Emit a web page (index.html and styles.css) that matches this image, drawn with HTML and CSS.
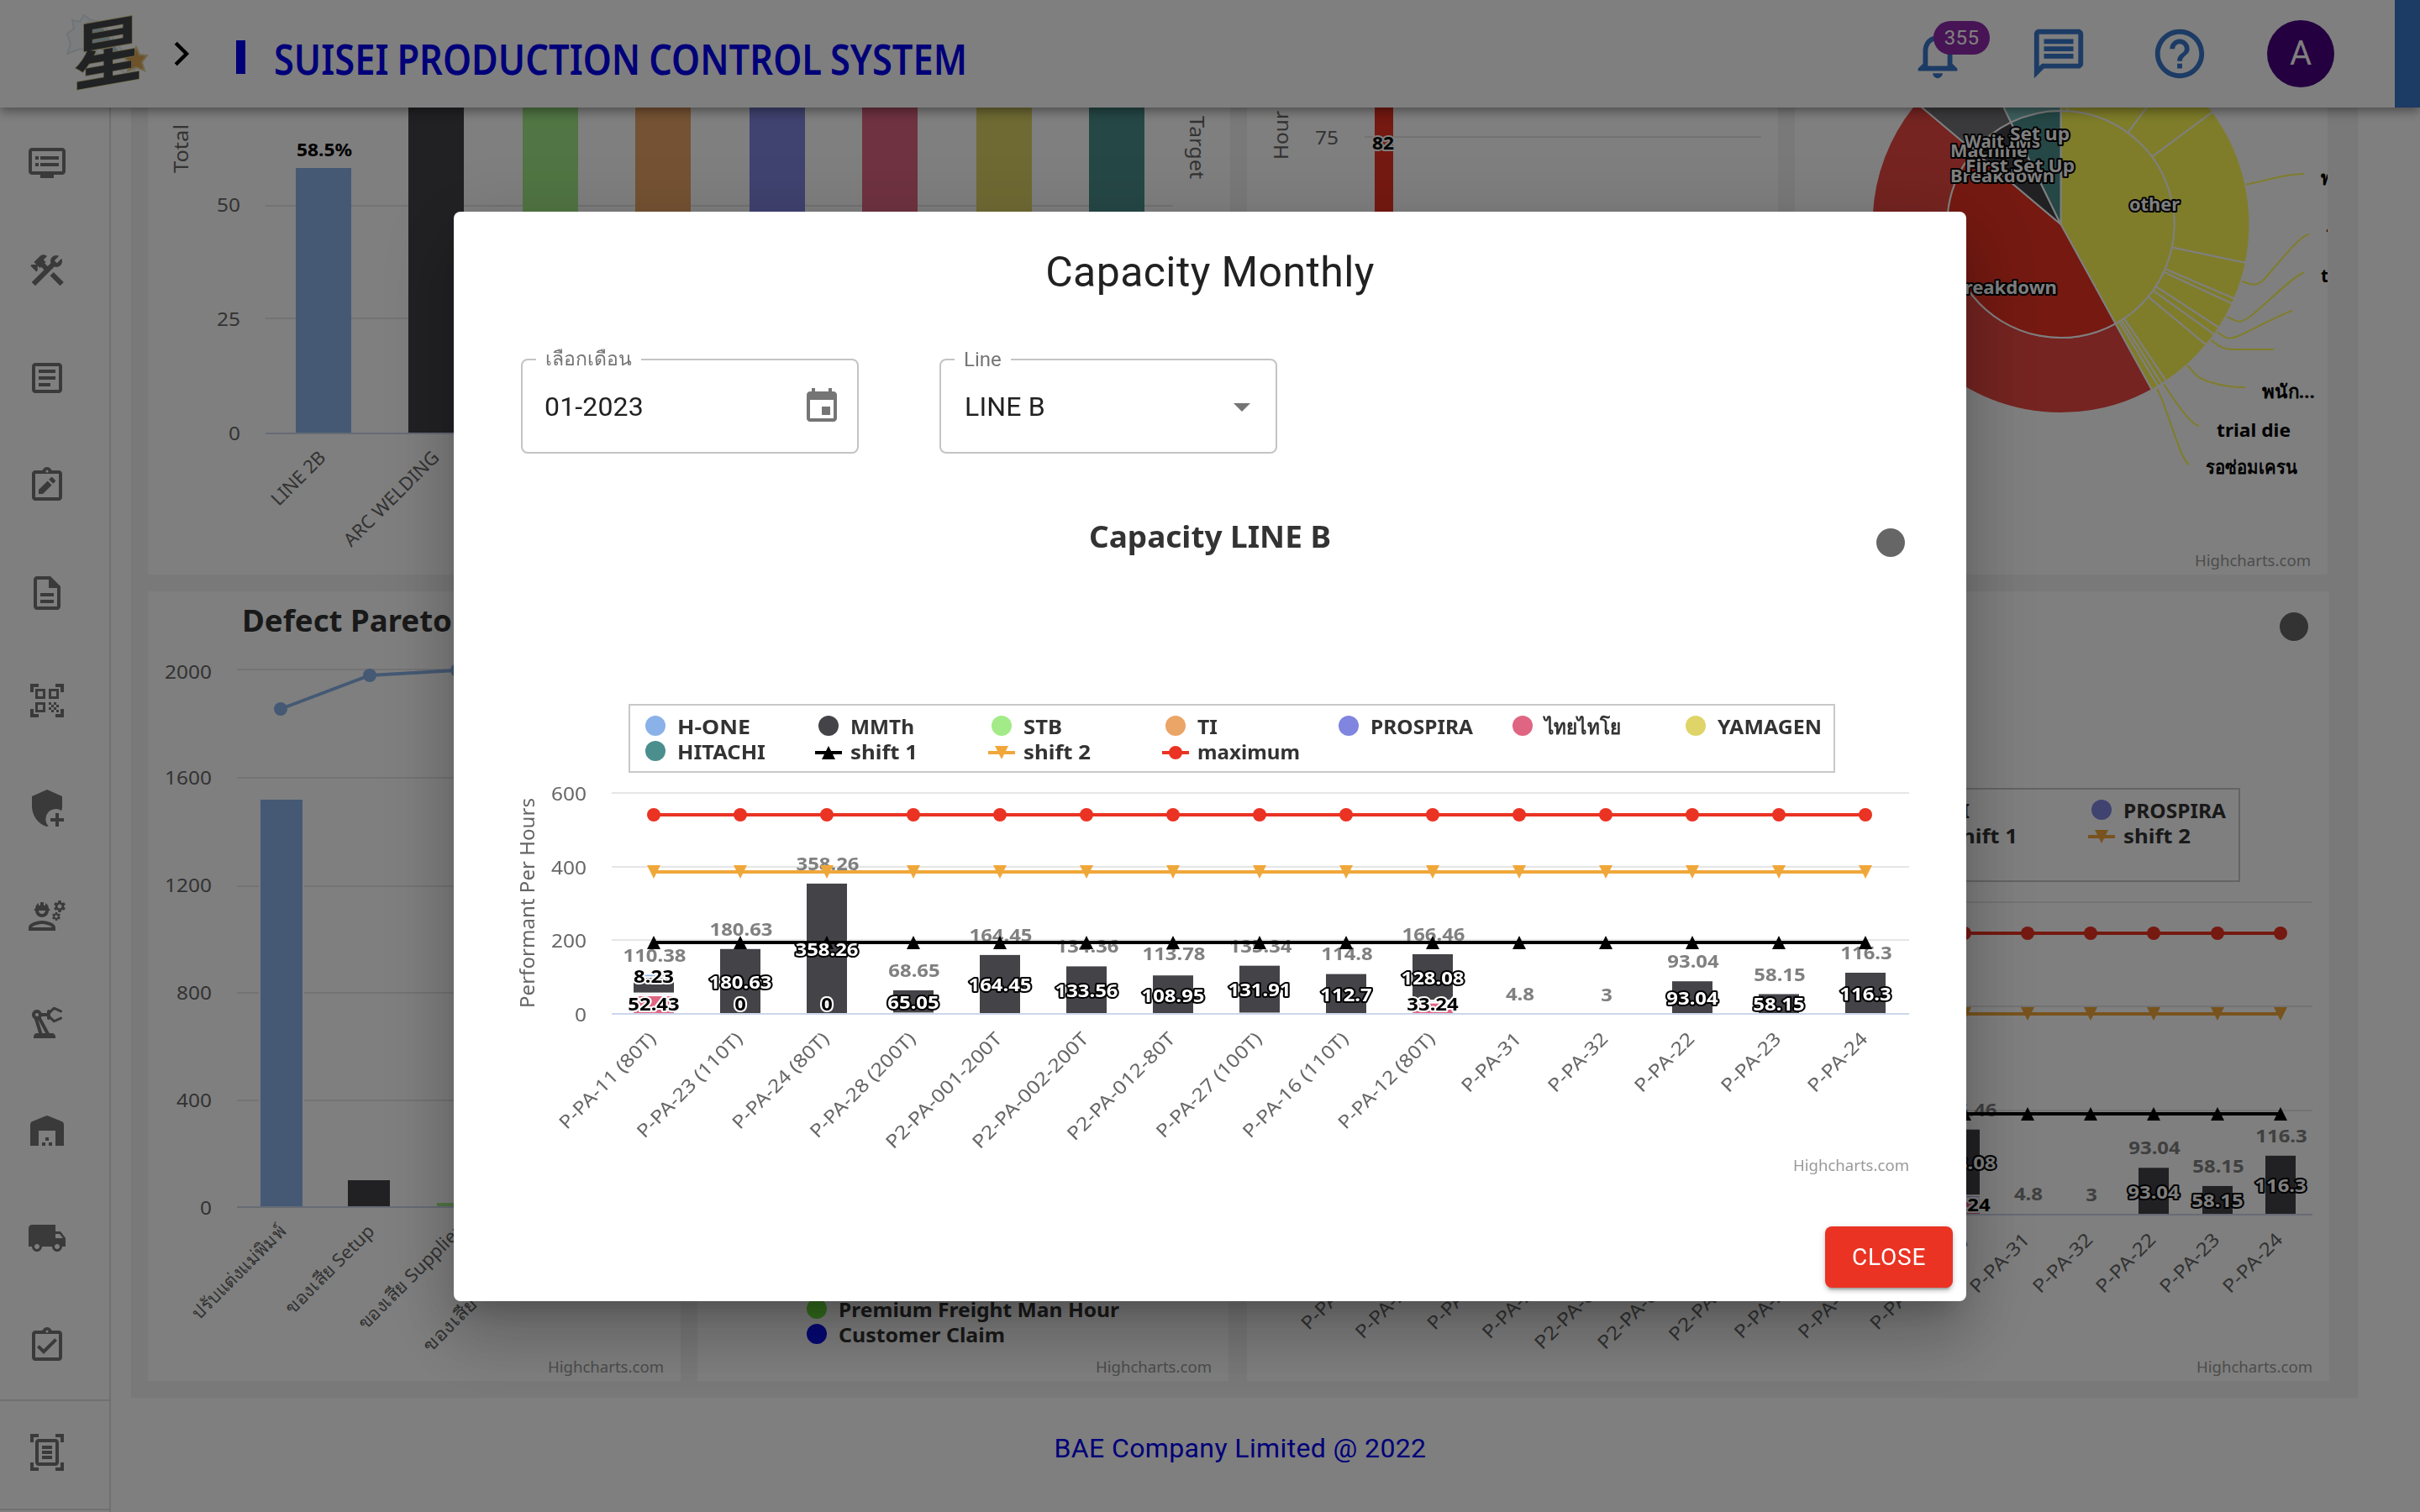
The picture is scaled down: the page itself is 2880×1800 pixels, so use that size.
FILE: index.html
```html
<!DOCTYPE html>
<html lang="th">
<head>
<meta charset="utf-8">
<title>SUISEI PRODUCTION CONTROL SYSTEM</title>
<link rel="stylesheet" href="styles.css">
</head>
<body>
<header class="appbar">
  <svg class="brand" viewBox="70 0 120 128" aria-label="SUISEI">
    <path class="splash-a" d="M80 40l8-6-2-10 9 2 5-8 8 6 12 2 28 38 14 18-10 8-30-24-26-8-16 6 4-12z"/>
    <path class="splash-b" d="M104 26l16 4 26 38-14 0-30-24z"/>
    <path class="gold-star" d="M162 56l4 9 9 1-6 8 3 10-10-4-10 5 1-11-6-7 10-2z"/>
    <text class="kanji" transform="translate(87 102) skewY(-10)" textLength="83" lengthAdjust="spacingAndGlyphs">星</text>
  </svg>
  <svg class="chevron" viewBox="0 0 24 24"><path d="M8.6 5.6l6.4 6.4-6.4 6.4"/></svg>
  <span class="bar"></span>
  <h1 class="app-title"><svg viewBox="0 0 830 64"><text x="2" y="49" textLength="825" lengthAdjust="spacingAndGlyphs">SUISEI PRODUCTION CONTROL SYSTEM</text></svg></h1>
  <nav class="actions">
    <span class="bell">
      <svg viewBox="0 0 24 24"><path d="M12 22c1.1 0 2-.9 2-2h-4c0 1.1.9 2 2 2zm6-6v-5c0-3.07-1.63-5.64-4.5-6.32V4c0-.83-.67-1.5-1.5-1.5s-1.5.67-1.5 1.5v.68C7.64 5.36 6 7.92 6 11v5l-2 2v1h16v-1l-2-2zm-2 1H8v-6c0-2.48 1.51-4.5 4-4.5s4 2.02 4 4.5v6z"/></svg>
      <b class="badge">355</b>
    </span>
    <svg viewBox="0 0 24 24"><path d="M4 4h16v12H5.17L4 17.17V4m0-2c-1.1 0-1.99.9-1.99 2L2 22l4-4h14c1.1 0 2-.9 2-2V4c0-1.1-.9-2-2-2H4zm2 10h12v2H6v-2zm0-3h12v2H6V9zm0-3h12v2H6V6z"/></svg>
    <svg viewBox="0 0 24 24"><path d="M11 18h2v-2h-2v2zm1-16C6.48 2 2 6.48 2 12s4.48 10 10 10 10-4.48 10-10S17.52 2 12 2zm0 18c-4.41 0-8-3.59-8-8s3.59-8 8-8 8 3.59 8 8-3.59 8-8 8zm0-14c-2.21 0-4 1.79-4 4h2c0-1.1.9-2 2-2s2 .9 2 2c0 2-3 1.75-3 5h2c0-2.25 3-2.5 3-5 0-2.21-1.79-4-4-4z"/></svg>
    <span class="avatar">A</span>
  </nav>
  <span class="edge"></span>
</header>

<div class="body">
<aside class="sidebar">
  <div class="item"><svg viewBox="0 0 24 24"><path d="M21 3H3c-1.1 0-2 .9-2 2v12c0 1.1.9 2 2 2h5v2h8v-2h5c1.1 0 1.99-.9 1.99-2L23 5c0-1.1-.9-2-2-2zm0 14H3V5h18v12zm-2-9H8v2h11V8zm0 4H8v2h11v-2zM7 8H5v2h2V8zm0 4H5v2h2v-2z"/></svg></div>
  <div class="item"><svg viewBox="0 0 24 24"><path d="m13.78 15.17 2.12-2.12 6 6-2.12 2.12zM17.5 10c1.93 0 3.5-1.57 3.5-3.5 0-.58-.16-1.12-.41-1.6l-2.7 2.7-1.49-1.49 2.7-2.7c-.48-.25-1.02-.41-1.6-.41C15.57 3 14 4.57 14 6.5c0 .41.08.8.21 1.16l-1.85 1.85-1.78-1.78.71-.71-1.41-1.41L12 3.49c-1.17-1.17-3.07-1.17-4.24 0L4.22 7.03l1.41 1.41H2.81l-.71.71 3.54 3.54.71-.71V9.15l1.41 1.41.71-.71 1.78 1.78-7.41 7.41 2.12 2.12L16.34 9.79c.36.13.75.21 1.16.21z"/></svg></div>
  <div class="item"><svg viewBox="0 0 24 24"><path d="M19 5v14H5V5h14m0-2H5c-1.1 0-2 .9-2 2v14c0 1.1.9 2 2 2h14c1.1 0 2-.9 2-2V5c0-1.1-.9-2-2-2zM14 17H7v-2h7v2zm3-4H7v-2h10v2zm0-4H7V7h10v2z"/></svg></div>
  <div class="item"><svg viewBox="0 0 24 24"><path fill-rule="evenodd" d="M19 3h-4.18C14.4 1.84 13.3 1 12 1s-2.4.84-2.82 2H5c-1.1 0-2 .9-2 2v14c0 1.1.9 2 2 2h14c1.1 0 2-.9 2-2V5c0-1.1-.9-2-2-2zM12 2.75a.75.75 0 1 1 0 1.5.75.75 0 0 1 0-1.5zM5 5h14v14H5zM7 14.5V17h2.5l5.3-5.3-2.5-2.5zM16.8 9.7c.3-.3.3-.7 0-1l-1.5-1.5c-.3-.3-.7-.3-1 0l-1.2 1.2 2.5 2.5z"/></svg></div>
  <div class="item"><svg viewBox="0 0 24 24"><path d="M8 16h8v2H8zm0-4h8v2H8zm6-10H6c-1.1 0-2 .9-2 2v16c0 1.1.89 2 1.99 2H18c1.1 0 2-.9 2-2V8l-6-6zm4 18H6V4h7v5h5v11z"/></svg></div>
  <div class="item"><svg viewBox="0 0 24 24"><path d="M9.5 6.5v3h-3v-3h3M11 5H5v6h6V5zm-1.5 9.5v3h-3v-3h3M11 13H5v6h6v-6zm6.5-6.5v3h-3v-3h3M19 5h-6v6h6V5zm-6 8h1.5v1.5H13V13zm1.5 1.5H16V16h-1.5v-1.5zM16 13h1.5v1.5H16V13zm-3 3h1.5v1.5H13V16zm1.5 1.5H16V19h-1.5v-1.5zM16 16h1.5v1.5H16V16zm1.5-1.5H19V16h-1.5v-1.5zm0 3H19V19h-1.5v-1.5zM22 7h-2V4h-3V2h5v5zm0 15v-5h-2v3h-3v2h5zM2 22h5v-2H4v-3H2v5zM2 2v5h2V4h3V2H2z"/></svg></div>
  <div class="item"><svg viewBox="0 0 24 24"><path d="M21 11V5l-9-4-9 4v6c0 5.55 3.84 10.74 9 12 .3-.07.6-.16.9-.26A6 6 0 0 1 20.6 13.6c.26-.85.4-1.7.4-2.6zM17 15h2v3h3v2h-3v3h-2v-3h-3v-2h3z"/></svg></div>
  <div class="item"><svg viewBox="0 0 24 24"><path d="M9 15c-2.67 0-8 1.34-8 4v2h16v-2c0-2.66-5.33-4-8-4zm-6 4c.22-.72 3.31-2 6-2 2.7 0 5.8 1.29 6 2H3zM4.74 9H5c0 2.21 1.79 4 4 4s4-1.79 4-4h.26c.27 0 .49-.22.49-.49v-.02c0-.27-.22-.49-.49-.49H13c0-1.48-.81-2.75-2-3.45v.95c0 .28-.22.5-.5.5s-.5-.22-.5-.5V4.14C9.68 4.06 9.35 4 9 4s-.68.06-1 .14V5.5c0 .28-.22.5-.5.5S7 5.78 7 5.5v-.95C5.81 5.25 5 6.52 5 8h-.26c-.27 0-.49.22-.49.49v.03c0 .26.22.48.49.48zM11 9c0 1.1-.9 2-2 2s-2-.9-2-2h4zM21.98 6.23l.93-.83-.75-1.3-1.19.39c-.14-.11-.3-.2-.47-.27L20.25 3h-1.5l-.25 1.22c-.17.07-.33.16-.48.27l-1.18-.39-.75 1.3.93.83c-.02.17-.02.35 0 .52l-.93.85.75 1.3 1.2-.38c.13.1.28.18.43.25l.28 1.23h1.5l.27-1.22c.16-.07.3-.15.44-.25l1.19.38.75-1.3-.93-.85c.03-.19.02-.36.01-.53zM19.5 7.75c-.69 0-1.25-.56-1.25-1.25s.56-1.25 1.25-1.25 1.25.56 1.25 1.25-.56 1.25-1.25 1.25zM19.4 10.79l-.85.28c-.1-.08-.21-.14-.33-.19l-.18-.88h-1.07l-.18.87c-.12.05-.24.12-.34.19l-.84-.28-.54.93.66.59c-.01.13-.01.25 0 .37l-.66.61.54.93.86-.27c.1.07.2.13.31.18l.18.88h1.07l.19-.87c.11-.05.22-.11.32-.18l.85.27.54-.93-.66-.61c.01-.13.01-.25 0-.37l.66-.59-.53-.93zM17.5 13.39c-.49 0-.89-.4-.89-.89s.4-.89.89-.89.89.4.89.89-.4.89-.89.89z"/></svg></div>
  <div class="item"><svg viewBox="0 0 24 24"><path d="M19.93 8.35l-3.6 1.68L14 7.7V6.3l2.33-2.33 3.6 1.68c.38.18.82.01 1-.36.18-.38.01-.82-.36-1l-3.92-1.83c-.38-.18-.83-.1-1.13.2L13.78 4.4c-.18-.24-.46-.4-.78-.4-.55 0-1 .45-1 1v1H8.82C8.4 4.84 7.3 4 6 4 4.34 4 3 5.34 3 7c0 1.1.6 2.05 1.48 2.58L7.08 18H6c-1.1 0-2 .9-2 2v1h13v-1c0-1.1-.9-2-2-2h-1.62L8.41 8.77c.17-.24.31-.49.41-.77H12v1c0 .55.45 1 1 1 .32 0 .6-.16.78-.4l1.74 1.74c.3.3.75.38 1.13.2l3.92-1.83c.38-.18.54-.62.36-1-.18-.37-.62-.54-1-.36zM6 8c-.55 0-1-.45-1-1s.45-1 1-1 1 .45 1 1-.45 1-1 1zm5.11 10H9.17l-2.46-8h.1l4.3 8z"/></svg></div>
  <div class="item"><svg viewBox="0 0 24 24"><path d="M22 19V8.35c0-.82-.5-1.55-1.26-1.86l-8-3.2c-.48-.19-1.01-.19-1.49 0l-8 3.2C2.5 6.8 2 7.54 2 8.35V21h5v-9h10v9h5v-2zm-11 0H9v2h2v-2zm2-3h-2v2h2v-2zm2 3h-2v2h2v-2z"/></svg></div>
  <div class="item"><svg viewBox="0 0 24 24"><path d="M20 8h-3V4H3c-1.1 0-2 .9-2 2v11h2c0 1.66 1.34 3 3 3s3-1.34 3-3h6c0 1.66 1.34 3 3 3s3-1.34 3-3h2v-5l-3-4zM6 18.5c-.83 0-1.5-.67-1.5-1.5s.67-1.5 1.5-1.5 1.5.67 1.5 1.5-.67 1.5-1.5 1.5zm13.5-9l1.96 2.5H17V9.5h2.5zm-1.5 9c-.83 0-1.5-.67-1.5-1.5s.67-1.5 1.5-1.5 1.5.67 1.5 1.5-.67 1.5-1.5 1.5z"/></svg></div>
  <div class="item"><svg viewBox="0 0 24 24"><path fill-rule="evenodd" d="M19 3h-4.18C14.4 1.84 13.3 1 12 1s-2.4.84-2.82 2H5c-1.1 0-2 .9-2 2v14c0 1.1.9 2 2 2h14c1.1 0 2-.9 2-2V5c0-1.1-.9-2-2-2zM12 2.75a.75.75 0 1 1 0 1.5.75.75 0 0 1 0-1.5zM5 5h14v14H5zM18 9l-1.41-1.42L10 14.17l-2.59-2.58L6 13l4 4z"/></svg></div>
  <div class="item last"><svg viewBox="0 0 24 24"><path d="M7 3H4v3H2V1h5v2zm15 3V1h-5v2h3v3h2zM7 21H4v-3H2v5h5v-2zm13-3v3h-3v2h5v-5h-2zM17 6v12H7V6h10m2 0c0-1.1-.9-2-2-2H7c-1.1 0-2 .9-2 2v12c0 1.1.9 2 2 2h10c1.1 0 2-.9 2-2V6zM15 8H9v2h6V8zm0 3H9v2h6v-2zm0 3H9v2h6v-2z"/></svg></div>
</aside>

<main class="main">
<section class="panel">
  <div class="row row-top">
    <article class="card wide">
      <svg viewBox="176 128 1288 556">
        <path class="grid" d="M316 110H1396M316 245H1396M316 379H1396"/>
        <g><rect x="352" y="200" width="66" height="315" fill="#8ab2e8"/><rect x="486" y="100" width="66" height="415" fill="#434348"/><rect x="622" y="100" width="66" height="415" fill="#a3eb88"/><rect x="756" y="100" width="66" height="415" fill="#eba566"/><rect x="892" y="100" width="66" height="415" fill="#8085e0"/><rect x="1026" y="100" width="66" height="415" fill="#df6582"/><rect x="1162" y="100" width="66" height="415" fill="#dfd467"/><rect x="1296" y="100" width="66" height="415" fill="#4a8f8d"/></g>
        <path class="axis" d="M316 516H1396"/>
        <text class="lbl bold black" x="353" y="186" textLength="66" lengthAdjust="spacingAndGlyphs">58.5%</text>
        <text class="lbl end" x="286" y="252" textLength="28" lengthAdjust="spacingAndGlyphs">50</text>
        <text class="lbl end" x="286" y="388" textLength="28" lengthAdjust="spacingAndGlyphs">25</text>
        <text class="lbl end" x="286" y="524" textLength="14" lengthAdjust="spacingAndGlyphs">0</text>
        <text class="ttl" transform="translate(224 206) rotate(-90)" textLength="58" lengthAdjust="spacingAndGlyphs">Total</text>
        <text class="ttl" transform="translate(1416 138) rotate(90)" textLength="75" lengthAdjust="spacingAndGlyphs">Target</text>
        <text class="lbl end" transform="translate(389 546) rotate(-45)" textLength="81" lengthAdjust="spacingAndGlyphs">LINE 2B</text>
        <text class="lbl end" transform="translate(524 546) rotate(-45)" textLength="150" lengthAdjust="spacingAndGlyphs">ARC WELDING</text>
      </svg>
    </article>
    <article class="card half">
      <svg viewBox="1484 128 632 556">
        <path class="grid" d="M1624 163H2096"/>
        <rect x="1636" y="120" width="22" height="360" fill="#ea3323"/>
        <text class="ttl" transform="translate(1533 190) rotate(-90)" textLength="58" lengthAdjust="spacingAndGlyphs">Hour</text>
        <text class="lbl end" x="1593" y="172" textLength="28" lengthAdjust="spacingAndGlyphs">75</text>
        <text class="lbl bold halo-light mid" x="1646" y="178" textLength="26" lengthAdjust="spacingAndGlyphs">82</text>
      </svg>
    </article>
    <article class="card third">
      <svg id="pie" viewBox="2136 128 634 556"></svg>
    </article>
  </div>

  <div class="row">
    <article class="card third">
      <svg viewBox="176 704 634 940">
        <text class="h" x="288" y="752" textLength="250" lengthAdjust="spacingAndGlyphs">Defect Pareto</text>
        <path class="grid" d="M282 797H780M282 926H780M282 1055H780M282 1182H780M282 1310H780"/>
        <g stroke="#fff" stroke-width="4" paint-order="stroke"><rect x="310" y="952" width="50" height="485" fill="#8ab2e8"/><rect x="414" y="1405" width="50" height="32" fill="#434348"/><rect x="520" y="1432" width="50" height="5" fill="#a3eb88"/></g>
        <path class="axis" d="M282 1437H780"/>
        <path d="M334 844L440 804L544 798" fill="none" stroke="#8ab2e8" stroke-width="4"/>
        <g fill="#8ab2e8"><circle cx="334" cy="844" r="8"/><circle cx="440" cy="804" r="8"/><circle cx="544" cy="798" r="8"/></g>
        <text class="lbl end" x="252" y="808" textLength="56" lengthAdjust="spacingAndGlyphs">2000</text>
        <text class="lbl end" x="252" y="934" textLength="56" lengthAdjust="spacingAndGlyphs">1600</text>
        <text class="lbl end" x="252" y="1062" textLength="56" lengthAdjust="spacingAndGlyphs">1200</text>
        <text class="lbl end" x="252" y="1190" textLength="42" lengthAdjust="spacingAndGlyphs">800</text>
        <text class="lbl end" x="252" y="1318" textLength="42" lengthAdjust="spacingAndGlyphs">400</text>
        <text class="lbl end" x="252" y="1446" textLength="14" lengthAdjust="spacingAndGlyphs">0</text>
        <text class="lbl end" transform="translate(342 1467) rotate(-45)" textLength="148" lengthAdjust="spacingAndGlyphs">ปรับแต่งแม่พิมพ์</text>
        <text class="lbl end" transform="translate(447 1467) rotate(-45)" textLength="140" lengthAdjust="spacingAndGlyphs">ของเสีย Setup</text>
        <text class="lbl end" transform="translate(552 1467) rotate(-45)" textLength="166" lengthAdjust="spacingAndGlyphs">ของเสีย Supplier</text>
        <text class="lbl end" transform="translate(656 1467) rotate(-45)" textLength="203" lengthAdjust="spacingAndGlyphs">ของเสีย ในไลน์ผลิต</text>
        <text class="credit" x="790" y="1634" textLength="138" lengthAdjust="spacingAndGlyphs">Highcharts.com</text>
      </svg>
    </article>
    <article class="card half">
      <svg viewBox="830 704 632 940">
        <circle cx="972" cy="1558" r="12" fill="#68e03c"/><circle cx="972" cy="1588" r="12" fill="#0b10e8"/>
        <text class="leg" x="998" y="1568" textLength="334" lengthAdjust="spacingAndGlyphs">Premium Freight Man Hour</text>
        <text class="leg" x="998" y="1598" textLength="198" lengthAdjust="spacingAndGlyphs">Customer Claim</text>
        <text class="credit" x="1442" y="1634" textLength="138" lengthAdjust="spacingAndGlyphs">Highcharts.com</text>
      </svg>
    </article>
    <article class="card wide last-card">
      <svg id="capacity-card" viewBox="1484 704 1288 940"></svg>
    </article>
  </div>
</section>
<footer class="footer">BAE Company Limited @ 2022</footer>
</main>
</div>

<div class="backdrop">
  <div class="dialog" role="dialog">
    <h2 class="dialog-title">Capacity Monthly</h2>
    <div class="fields">
      <fieldset class="field"><legend class="thai">เลือกเดือน</legend><span>01-2023</span>
        <svg class="cal" viewBox="0 0 24 24"><path d="M17 12h-5v5h5v-5zM16 1v2H8V1H6v2H5c-1.11 0-1.99.9-1.99 2L3 19c0 1.1.89 2 2 2h14c1.1 0 2-.9 2-2V5c0-1.1-.9-2-2-2h-1V1h-2zm3 18H5V8h14v11z"/></svg></fieldset>
      <fieldset class="field select"><legend>Line</legend><span>LINE B</span>
        <svg class="arrow" viewBox="0 0 24 24"><path d="M7 10l5 5 5-5z"/></svg></fieldset>
    </div>
    <svg class="chart" id="capacity-dialog" viewBox="600 600 1700 820"></svg>
    <div class="dialog-actions"><button class="close">CLOSE</button></div>
  </div>
</div>
<script src="charts.js"></script>
</body>
</html>
```
FILE: styles.css
```css
* { box-sizing: border-box; }
html, body { margin: 0; height: 1800px; overflow: hidden; background: #fff; font-family: Roboto, "Noto Sans", "Liberation Sans", sans-serif; }
svg { display: block; }

.appbar { position: relative; z-index: 2; display: flex; align-items: center; height: 128px; background: #fff; padding-left: 70px;
  box-shadow: 0 4px 8px -2px rgba(0,0,0,.2), 0 8px 10px rgba(0,0,0,.14), 0 2px 20px rgba(0,0,0,.12); }
.brand { width: 120px; height: 128px; }
.kanji { font: 700 87px "Noto Sans CJK JP", sans-serif; fill: #434548; stroke: #d8c88a; stroke-width: 1.5px; paint-order: stroke; }
.splash-a { fill: #f6f9fa; stroke: #dde9ee; stroke-width: 2px; }
.splash-b { fill: #b4d2df; }
.gold-star { fill: #dba455; stroke: #e3cf9a; stroke-width: 2px; }
.chevron { width: 48px; height: 48px; margin-left: 2px; }
.chevron path { fill: none; stroke: #000; stroke-width: 2.2; }
.bar { width: 11px; height: 40px; margin: 8px 0 0 41px; background: #0000f0; }
.app-title { width: 830px; height: 64px; margin: 16px 0 0 32px; }
.app-title text { font: 600 50px "Noto Sans", sans-serif; fill: #0000f0; word-spacing: -1.5px; }
.actions { display: flex; align-items: center; gap: 74px; margin-left: auto; padding-right: 72px; }
.actions svg { width: 70px; height: 70px; fill: #3876cb; }
.bell { position: relative; }
.badge { position: absolute; left: 30px; top: -4px; width: 67px; height: 40px; border-radius: 20px; background: #8f2aaa; color: #fff; font: 400 24px/40px Roboto, sans-serif; text-align: center; letter-spacing: .4px; }
.avatar { width: 80px; height: 80px; border-radius: 50%; background: #480080; color: #fff; font-size: 40px; line-height: 80px; text-align: center; margin-left: -5px; }
.edge { width: 30px; height: 128px; background: #3876cb; }

.body { display: flex; height: 1672px; }
.sidebar { width: 132px; border-right: 2px solid #e0e0e0; padding-top: 2px; }
.item { height: 128px; padding: 40px 32px; }
.item svg { width: 48px; height: 48px; fill: #757575; }
.item.last { height: 132px; padding-top: 37px; border-top: 2px solid #e0e0e0; border-bottom: 2px solid #e0e0e0; }

.main { flex: 1; padding: 0 74px 0 24px; }
.panel { background: #f2f2f2; padding: 0 34px 20px 20px; height: 1536px; display: flex; flex-direction: column; gap: 20px; }
.row { display: flex; gap: 20px; height: 940px; }
.row-top { height: 556px; }
.card { background: #fff; overflow: hidden; }
.wide { width: 1288px; }
.half { width: 632px; }
.third { width: 634px; }
.last-card { margin-left: 2px; }
.card svg { width: 100%; height: 100%; }
.footer { padding-top: 38px; text-align: center; font-size: 32px; line-height: 44px; color: #0000f0; letter-spacing: .38px; padding-right: 10px; }

.grid { stroke: #e6e6e6; stroke-width: 2; fill: none; }
.axis { stroke: #ccd6eb; stroke-width: 2; fill: none; }
.lbl, .ttl, .h, .leg, .credit { font-family: "Noto Sans", sans-serif; }
.lbl { font-size: 22px; fill: #666; }
.ttl { font-size: 24px; fill: #666; }
.h { font-size: 36px; font-weight: 700; fill: #333; }
.leg { font-size: 24px; font-weight: 700; fill: #333; }
.credit { font-size: 18px; fill: #999; text-anchor: end; }
.bold { font-weight: 700; }
.black { fill: #000; }
.end { text-anchor: end; }
.mid { text-anchor: middle; }
.total { fill: #808080; }
.halo-dark { fill: #fff; stroke: #000; stroke-width: 4px; stroke-linejoin: round; paint-order: stroke; }
.halo-light { fill: #000; stroke: #fff; stroke-width: 4px; stroke-linejoin: round; paint-order: stroke; }
.wire { fill: none; stroke: #fefb54; stroke-width: 2; }

.backdrop { position: fixed; inset: 0; z-index: 5; background: rgba(0,0,0,.5); display: flex; align-items: center; justify-content: center; }
.dialog { width: 1800px; height: 1297px; background: #fff; border-radius: 8px; display: flex; flex-direction: column;
  box-shadow: 0 22px 30px -14px rgba(0,0,0,.2), 0 48px 76px 6px rgba(0,0,0,.14), 0 18px 92px 16px rgba(0,0,0,.12); }
.dialog-title { margin: 0; padding-top: 40px; height: 158px; font-weight: 400; font-size: 50px; line-height: 64px; text-align: center; color: #212121; letter-spacing: .4px; }
.fields { display: flex; gap: 96px; padding-left: 80px; height: 190px; }
.field { position: relative; width: 402px; height: 130px; margin: 0; padding: 0 26px; border: 2px solid #c4c4c4; border-radius: 8px; font-size: 32px; color: #212121; min-width: 0; }
.field legend { height: 36px; padding: 0 11px; margin-left: -10px; font: 400 24px/36px Roboto, "Noto Sans", sans-serif; color: #757575; }
.field legend.thai { font-size: 23px; }
.field span { display: block; line-height: 40px; margin-top: 18px; letter-spacing: .15px; }
.field.select span { margin-left: 2px; }
.field svg { position: absolute; width: 48px; height: 48px; top: 14px; fill: #757575; }
.cal { right: 18px; }
.arrow { right: 16px; }
.chart { width: 1700px; height: 820px; margin-left: 60px; }
.dialog-actions { display: flex; justify-content: flex-end; padding: 40px 16px 0; }
.close { width: 152px; height: 73px; border: 0; border-radius: 8px; background: #ea3323; color: #fff; font: 400 28px Roboto, sans-serif; letter-spacing: .8px; padding: 0;
  box-shadow: 0 6px 2px -4px rgba(0,0,0,.2), 0 4px 4px rgba(0,0,0,.14), 0 2px 10px rgba(0,0,0,.12); }
```
FILE: charts.js
```js
const COLORS = { hone: '#8ab2e8', mmth: '#434348', stb: '#a3eb88', ti: '#eba566', prospira: '#8085e0', thai: '#df6582', yamagen: '#dfd467', hitachi: '#4a8f8d', shift1: '#000', shift2: '#f0a73a', max: '#ea3323' };
const P = 'prospira', M = 'mmth', T = 'thai', H = 'hone';

// Stacks run from the axis upwards: [series, value, label].
const MACHINES = [
  { name: 'P-PA-11 (80T)', len: 152, total: '110.38', stack: [[T, 52.43, '52.43'], [P, 5.5], [M, 44.2], [H, 8.23, '8.23']] },
  { name: 'P-PA-23 (110T)', len: 167, total: '180.63', stack: [[M, 180.63, '180.63'], [H, 0, '0']] },
  { name: 'P-PA-24 (80T)', len: 152, total: '358.26', stack: [[M, 358.26, '358.26'], [H, 0, '0']] },
  { name: 'P-PA-28 (200T)', len: 167, total: '68.65', stack: [[null, 3.6], [M, 65.05, '65.05']] },
  { name: 'P2-PA-001-200T', len: 185, total: '164.45', stack: [[M, 164.45, '164.45']] },
  { name: 'P2-PA-002-200T', len: 185, total: '134.36', stack: [[M, 133.56, '133.56']] },
  { name: 'P2-PA-012-80T', len: 171, total: '113.78', stack: [[M, 108.95, '108.95']] },
  { name: 'P-PA-27 (100T)', len: 167, total: '135.34', stack: [[null, 3.43], [M, 131.91, '131.91']] },
  { name: 'P-PA-16 (110T)', len: 167, total: '114.8', stack: [[M, 112.7, '112.7']] },
  { name: 'P-PA-12 (80T)', len: 152, total: '166.46', stack: [[T, 33.24, '33.24'], [P, 5.14], [M, 128.08, '128.08']] },
  { name: 'P-PA-31', len: 90, total: '4.8', stack: [] },
  { name: 'P-PA-32', len: 90, total: '3', stack: [] },
  { name: 'P-PA-22', len: 90, total: '93.04', stack: [[M, 93.04, '93.04']] },
  { name: 'P-PA-23', len: 90, total: '58.15', stack: [[M, 58.15, '58.15']] },
  { name: 'P-PA-24', len: 90, total: '116.3', stack: [[M, 116.3, '116.3']] }
];

const fit = w => `textLength="${w}" lengthAdjust="spacingAndGlyphs"`;
const numWidth = s => [...s].reduce((w, c) => w + (c === '.' ? 7 : 13.6), 0);
const text = (cls, x, y, s, w) => `<text class="${cls}" x="${x}" y="${y}" ${fit(w)}>${s}</text>`;

function marker(kind, x, y) {
  if (kind === 'max') return `<circle cx="${x}" cy="${y}" r="8"/>`;
  const d = kind === 'shift1' ? -8 : 8;
  return `<path d="M${x - 8} ${y - d}h16L${x} ${y + d}z"/>`;
}

function legendItem([kind, x, y, label, w]) {
  const line = kind.startsWith('shift') || kind === 'max';
  const c = COLORS[kind];
  const symbol = line
    ? `<g fill="${c}"><rect x="${x - 16}" y="${y}" width="32" height="4"/>${marker(kind, x, y + 2)}</g>`
    : `<circle cx="${x}" cy="${y}" r="12" fill="${c}"/>`;
  return symbol + text('leg', x + 26, y + 10, label, w);
}

function capacity(id, o) {
  const y = v => o.base - v * o.scale;
  const cx = i => Math.round(o.first + i * o.step);
  let s = `<circle cx="${o.menu[0]}" cy="${o.menu[1]}" r="17" fill="#666"/>`;
  s += `<rect x="${o.box[0]}" y="${o.box[1]}" width="${o.box[2]}" height="${o.box[3]}" fill="none" stroke="#c8c8c8" stroke-width="2"/>`;
  s += o.legend.map(legendItem).join('');
  s += `<path class="grid" d="${[200, 400, 600].map(v => `M${o.left} ${Math.round(y(v))}H${o.right}`).join('')}"/>`;
  let bars = '', totals = '', labels = '', names = '';
  MACHINES.forEach((m, i) => {
    let sum = 0;
    m.stack.forEach(([k, v, label]) => {
      const top = y(sum + v), h = v * o.scale;
      if (k && v) bars += `<rect x="${cx(i) - o.bar / 2 - 1}" y="${top + 1}" width="${o.bar + 2}" height="${h}" fill="${COLORS[k]}" stroke="#fff" stroke-width="2"/>`;
      // Labels of zero values stay at the foot of the column.
      const ly = v ? Math.min(top + h / 2 + 9.5, o.base - 4.5) : o.base - 4.5;
      if (label) labels += text('lbl bold mid ' + (k === M ? 'halo-dark' : 'halo-light'), cx(i), ly, label, numWidth(label));
      sum += v;
    });
    totals += text('lbl bold mid total', cx(i) + 1, y(+m.total) - 14, m.total, numWidth(m.total));
    names += `<text class="lbl end" transform="translate(${cx(i) + 4} ${o.base + 31}) rotate(-45)" ${fit(m.len)}>${m.name}</text>`;
  });
  s += bars + `<path class="axis" d="M${o.left} ${o.base}H${o.right}"/>` + totals;
  [['shift1', 193], ['shift2', 385], ['max', 540]].forEach(([k, v]) => {
    const yy = Math.round(y(v));
    s += `<g fill="${COLORS[k]}"><rect x="${cx(0)}" y="${yy - 2}" width="${cx(14) - cx(0)}" height="4"/>${MACHINES.map((_, i) => marker(k, cx(i), yy)).join('')}</g>`;
  });
  s += labels + names + (o.extra || '') + `<text class="credit" x="${o.right}" y="${o.credit}" ${fit(138)}>Highcharts.com</text>`;
  document.getElementById(id).innerHTML = s;
}

capacity('capacity-dialog', {
  base: 1207, scale: .4385, first: 778.3, step: 102.97, bar: 48, left: 728, right: 2272, credit: 1394,
  menu: [2250, 646], box: [749, 839, 1434, 80],
  legend: [['hone', 780, 864, 'H-ONE', 87], ['mmth', 986, 864, 'MMTh', 76], ['stb', 1192, 864, 'STB', 46], ['ti', 1399, 864, 'TI', 24],
    ['prospira', 1605, 864, 'PROSPIRA', 122], ['thai', 1812, 864, 'ไทยไทโย', 91], ['yamagen', 2018, 864, 'YAMAGEN', 124],
    ['hitachi', 780, 894, 'HITACHI', 105], ['shift1', 986, 894, 'shift 1', 80], ['shift2', 1192, 894, 'shift 2', 80], ['max', 1399, 894, 'maximum', 122]],
  extra: text('h', 1296, 652, 'Capacity LINE B', 288)
    + ['0', '200', '400', '600'].map((t, i) => text('lbl end', 698, 1216 - i * 87.7, t, t.length * 14)).join('')
    + `<text class="ttl" transform="translate(636 1200) rotate(-90)" ${fit(250)}>Performant Per Hours</text>`
});

capacity('capacity-card', {
  base: 1446, scale: .6205, first: 1661, step: 75.2, bar: 36, left: 1619, right: 2752, credit: 1634,
  menu: [2730, 746], box: [1619, 939, 1046, 110],
  legend: [['ti', 2295, 964, 'TI', 23], ['prospira', 2501, 964, 'PROSPIRA', 122], ['shift1', 2295, 994, 'shift 1', 80], ['shift2', 2501, 994, 'shift 2', 80]]
});

(function pie() {
  const X = 2452.5, Y = 267, R = 225, r = 135;
  const pt = (a, d) => [X + d * Math.sin(a * Math.PI / 180), Y - d * Math.cos(a * Math.PI / 180)].map(n => n.toFixed(1)).join(' ');
  const ring = (a, b, i, o, c) => `<path d="M${pt(a, i)}L${pt(a, o)}A${o} ${o} 0 ${b - a > 180 ? 1 : 0} 1 ${pt(b, o)}L${pt(b, i)}A${i || 1} ${i || 1} 0 ${b - a > 180 ? 1 : 0} 0 ${pt(a, i)}z" fill="${c}" stroke="#fff" stroke-width="2"/>`;
  const cuts = [0, 3.3, 36.3, 53.5, 101.8, 113.2, 114.9, 123.2, 125.7, 129.7, 146.1, 147.7, 149, 151.2];
  let s = cuts.slice(1).map((b, i) => ring(cuts[i], b, r, R, '#fefb54')).join('');
  s += ring(151.2, 310.1, r, R, '#ea4842') + ring(310.1, 334, r, R, '#747478') + ring(334, 360, r, R, '#7cc0be');
  s += ring(0, 151.2, 0, r, '#fefb54') + ring(151.2, 310.1, 0, r, '#ea3323') + ring(310.1, 334, 0, r, '#434348') + ring(334, 360, 0, r, '#4a8f8d');
  s += ['M2673 219.5C2695 216 2718 207 2742 207', 'M2668 335C2676 337 2684 343 2694 333S2736 280 2748 279', 'M2650 377C2660 381 2663 387 2676 378S2733 325 2742 324.5',
    'M2639 395C2646 400 2650 406 2664 400S2722 370 2728 370', 'M2631 405C2640 411 2643 416 2660 416S2700 416 2706 416', 'M2603 435C2612 444 2612 450 2634 456S2666 461 2672 461',
    'M2575 457C2582 468 2605 505 2617 507', 'M2567 463C2578 481 2595 549 2605 553'].map(d => `<path class="wire" d="${d}"/>`).join('');
  s += text('lbl bold halo-dark', 2321, 186.5, 'Machine', 92) + text('lbl bold halo-dark', 2321, 216.5, 'Breakdown', 124)
    + text('lbl bold halo-dark', 2338, 175.5, 'Wait IMs', 90) + text('lbl bold halo-dark', 2339, 205, 'First Set Up', 130)
    + text('lbl bold halo-dark', 2392, 167, 'Set up', 71) + text('lbl bold halo-dark', 2534, 251, 'other', 60) + text('lbl bold halo-dark', 2323, 350, 'Breakdown', 125);
  s += text('lbl bold black', 2762, 220, 'พนักงาน', 80) + text('lbl bold black', 2768, 284, 'รอ', 24) + text('lbl bold black', 2762, 336, 'trial', 44)
    + text('lbl bold black', 2692, 474, 'พนัก…', 63) + text('lbl bold black', 2638, 520, 'trial die', 88) + text('lbl bold black', 2625, 564, 'รอซ่อมเครน', 109);
  s += `<text class="credit" x="2750" y="674" ${fit(138)}>Highcharts.com</text>`;
  document.getElementById('pie').innerHTML = s;
})();
```
